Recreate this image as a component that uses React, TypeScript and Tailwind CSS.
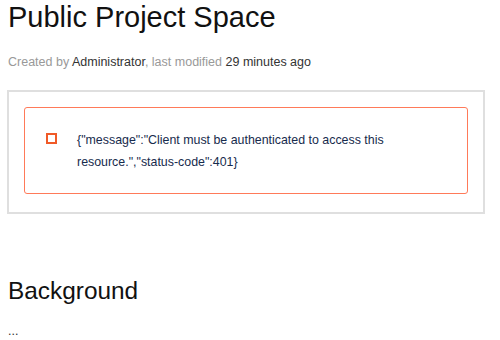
export default function App() {
  return (
    <div className="w-[500px] h-[340px] overflow-hidden bg-white font-['Liberation_Sans',Arial,sans-serif] text-[#172b4d]">
      <div className="pl-[8px] pr-[15px]">
        {/* title */}
        <h1 className="pt-[1px] text-[29px] leading-[32px] text-[#111]">Public Project Space</h1>

        {/* page meta */}
        <div className="mt-[19px] text-[12.5px] leading-[20px] text-[#999]">
          Created by <span className="text-[#333]">Administrator</span>, last modified{" "}
          <span className="text-[#333]">29 minutes ago</span>
        </div>

        {/* error macro */}
        <div className="mt-[18px] -ml-[1px] border-2 border-[#dfdfdf] px-[15px] pt-[15px] pb-[18px]">
          <div className="flex rounded-[3px] border border-[#ff7a59] pl-[21px] pr-[20px] pt-[17px] pb-[20px]">
            <div className="mt-[8px] h-[11px] w-[11px] shrink-0 border-2 border-[#f05a28]" />
            <div className="ml-[20px] mt-[4px] text-[12.4px] leading-[22px] text-[#172b4d]">
              {'{"message":"Client must be authenticated to access this resource.","status-code":401}'}
            </div>
          </div>
        </div>

        {/* section */}
        <h2 className="mt-[63px] text-[24.4px] leading-[28px] text-[#111]">Background</h2>
        <p className="mt-[16px] text-[12.4px] leading-[20px] text-[#333]">...</p>
      </div>
    </div>
  );
}
